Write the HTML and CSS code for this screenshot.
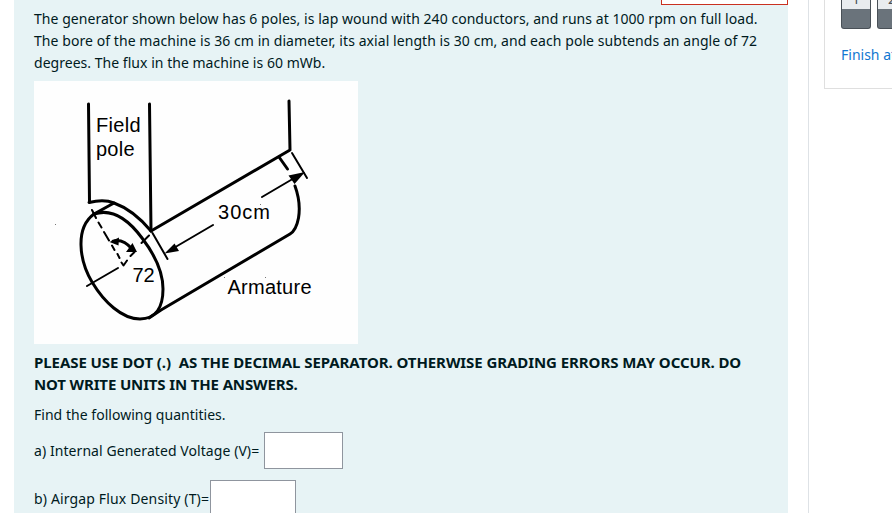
FILE: index.html
```
<!DOCTYPE html>
<html lang="en">
<head>
    <meta charset="UTF-8">
    <meta name="viewport" content="width=device-width, initial-scale=1.0">
    <title>Quiz</title>
    <link rel="stylesheet" href="styles.css">
</head>
<body>

    <div class="page">
        <!-- Question -->
        <main class="question">
            <div class="notice"></div>
            <div class="question-text">
                <p class="intro">
                    <span class="line line-1">The generator shown below has 6 poles, is lap wound with 240 conductors, and runs at 1000 rpm on full load.</span>
                    <span class="line line-2">The bore of the machine is 36 cm in diameter, its axial length is 30 cm, and each pole subtends an angle of 72</span>
                    <span class="line line-3">degrees. The flux in the machine is 60 mWb.</span>
                </p>

                <svg class="figure" width="324" height="263" viewBox="0 0 324 263">
                    <!-- Field pole -->
                    <g class="thick">
                        <path d="M54.5 23L55.5 121M115.5 23L117 150"/>
                        <path d="M55 121.5C65 119 73 119 80 122C94 127 107 138 117 150"/>
                        <path d="M60 133L80 122"/>
                    </g>
                    <!-- Armature -->
                    <g class="thick">
                        <path d="M60 133C75 128 91 134 108 157C121 174 129 192 129 208C129 226 122 238 106 238C88 238 70 221 58 201C45 179 41 147 60 133Z"/>
                        <path d="M117 150L256 69L255 20"/>
                        <path d="M245 76L253.5 88"/>
                        <path d="M261 105C265 116 266 128 264.5 137C263 145 261 150 256 153L127 229L115 237"/>
                    </g>
                    <!-- Dimension lines -->
                    <g class="thin">
                        <path d="M258 72L273 97M228 116L262 96"/>
                        <path d="M118.5 152L133.5 178M179 144L138 168"/>
                        <path d="M53 205L84 187"/>
                        <path d="M58 129L62 137M64.5 141.5L67.5 146.5M70 151L75 159.5M78 164.5L80.5 169M83.5 173L85.5 177M87.5 181.5L89.5 184.5L93 179.5M96.5 175L100.5 171M107.5 162L115 154.5"/>
                        <path class="arc" d="M79 160C87 158 93 162 98 168"/>
                    </g>
                    <path d="M271 91L254.5 94.5L260.5 103ZM130.5 172.5L140.5 162.5L145 170ZM75.5 161L85 156.5L84.5 164.5ZM103 171L92 171L98.5 162Z"/>
                    <!-- Scan specks -->
                    <path class="specks" d="M21 143h1v1h-1zM190 196h1v1h-1zM231 196h1v1h-1zM226 123h1v1h-1z"/>
                    <text x="62" y="51" textLength="44.5">Field</text>
                    <text x="62" y="75" textLength="38.5">pole</text>
                    <text x="184" y="138" textLength="52">30cm</text>
                    <text x="98.5" y="201">72</text>
                    <text x="193.5" y="213" textLength="84">Armature</text>
                </svg>

                <p class="warning">
                    <span class="line line-4">PLEASE USE DOT (.)&nbsp; AS THE DECIMAL SEPARATOR. OTHERWISE GRADING ERRORS MAY OCCUR. DO</span>
                    <span class="line line-5">NOT WRITE UNITS IN THE ANSWERS.</span>
                </p>
                <p class="find"><span class="line line-6">Find the following quantities.</span></p>
                <div class="answer">
                    <label class="line-7" for="voltage">a) Internal Generated Voltage (V)=</label>
                    <input class="voltage" id="voltage" type="text">
                </div>
                <div class="answer">
                    <label class="line-8" for="flux">b) Airgap Flux Density (T)=</label>
                    <input class="flux" id="flux" type="text">
                </div>
            </div>
        </main>

        <!-- Quiz navigation -->
        <aside class="sidebar">
            <div class="nav-card">
                <div class="nav-buttons">
                    <div class="nav-button"><span>1</span></div>
                    <div class="nav-button"><span>2</span></div>
                </div>
                <a class="finish" href="#">Finish attempt ...</a>
            </div>
        </aside>
    </div>

</body>
</html>
```
FILE: styles.css
```
* {
    margin: 0;
    padding: 0;
    box-sizing: border-box;
}

body {
    font-family: 'Noto Sans', sans-serif;
    font-size: 14px;
    line-height: 22px;
    color: #001a1e;
    background: #fff;
    overflow: hidden;
}

.page {
    display: flex;
    width: 100%;
    height: 513px;
    overflow: hidden;
}

/* Question */
.question {
    flex: none;
    width: 774px;
    height: 540px;
    margin-left: 14px;
    background: #e7f3f5;
}

.notice {
    width: 127px;
    height: 5px;
    margin-left: auto;
    background: #fff;
    border: 1px solid #ca3120;
    border-top: none;
}

.question-text {
    padding: 3px 20px 0;
}

.line {
    display: block;
    white-space: nowrap;
}

.line-1 { letter-spacing: 0.045px; }
.line-2 { letter-spacing: 0.067px; }
.line-3 { letter-spacing: 0.03px; }
.line-4 { letter-spacing: -0.07px; }
.line-5 { letter-spacing: -0.14px; }
.line-6 { letter-spacing: 0.03px; }
.line-7 { letter-spacing: 0.07px; }
.line-8 { letter-spacing: 0.15px; }

.figure {
    display: block;
    margin-top: 7px;
    background: #fefefe;
    font-family: 'Liberation Sans', Arial, sans-serif;
    font-size: 20px;
}

.thick,
.thin {
    fill: none;
    stroke: #000;
    stroke-width: 3;
    stroke-linecap: round;
    stroke-linejoin: round;
}

.thin {
    stroke-width: 2;
}

.arc {
    stroke-width: 2.8;
}

.specks {
    fill: #777;
}

.warning {
    margin-top: 7px;
    font-size: 15px;
    font-weight: bold;
}

.find {
    margin-top: 9px;
}

/* Answers */
.answer {
    display: flex;
    align-items: center;
    height: 37px;
    margin-top: 6px;
    white-space: nowrap;
}

.answer + .answer {
    margin-top: 11px;
}

.answer label {
    flex: none;
    width: 230px;
}

.answer .line-8 {
    width: 176px;
}

.answer input {
    width: 79px;
    height: 37px;
    background: #fff;
    border: 1px solid #8f959e;
}

.answer .flux {
    width: 86px;
}

/* Quiz navigation */
.sidebar {
    flex: 1;
    min-width: 0;
    height: 513px;
    margin-left: 20px;
    padding-left: 15px;
    border-left: 1px solid #dee2e6;
}

.nav-card {
    height: 89px;
    padding-left: 16px;
    border: 1px solid #dfdfdf;
    border-top: none;
    border-right: none;
    overflow: hidden;
}

.nav-buttons {
    display: flex;
    gap: 6px;
}

.nav-button {
    flex: none;
    width: 30px;
    height: 29px;
    overflow: hidden;
    text-align: center;
    color: #495057;
    background: linear-gradient(#e9ecef 9px, #6a737b 9px);
    border: 1px solid #495057;
    border-top: none;
    border-radius: 0 0 3px 3px;
}

.nav-button span {
    display: block;
    margin-top: -12px;
}

.finish {
    display: block;
    margin-top: 15px;
    white-space: nowrap;
    color: #1177d1;
    text-decoration: none;
}
```
